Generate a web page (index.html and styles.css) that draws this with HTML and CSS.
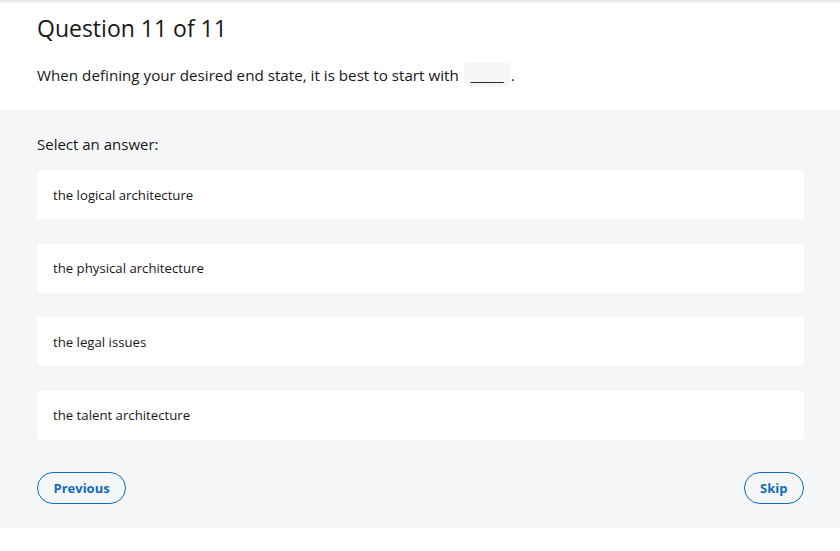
FILE: index.html
```html
<!DOCTYPE html>
<html lang="en">
<head>
<meta charset="utf-8">
<link rel="stylesheet" href="styles.css">
</head>
<body>
<div class="topline"></div>
<header class="head">
  <h1 class="title">Question 11 of 11</h1>
  <p class="question">When defining your desired end state, it is best to start with <span class="blank">_____</span>.</p>
</header>
<main class="answers">
  <p class="prompt">Select an answer:</p>
  <div class="options">
    <div class="option">the logical architecture</div>
    <div class="option">the physical architecture</div>
    <div class="option">the legal issues</div>
    <div class="option">the talent architecture</div>
  </div>
  <div class="nav">
    <button class="btn">Previous</button>
    <button class="btn">Skip</button>
  </div>
</main>
</body>
</html>
```
FILE: styles.css
```css
* { box-sizing: border-box; }
html, body { margin: 0; padding: 0; background: #fff; }
body {
  font-family: "Open Sans", "Noto Sans", sans-serif;
  color: #171717;
  width: 840px;
}
.topline {
  height: 4px;
  background: linear-gradient(#e6e6e6, #fff);
}
.head {
  padding: 8px 36px 0 37px;
  height: 106px;
}
.title {
  margin: 0;
  font-size: 23px;
  font-weight: 400;
  line-height: 32px;
}
.question {
  margin: 19px 0 0;
  font-size: 15.2px;
  line-height: 24px;
}
.blank {
  display: inline-block;
  width: 47px;
  text-align: center;
  background: #f5f6f8;
  border-radius: 4px;
  margin-left: 1px;
  transform: scaleX(1);
}
.answers {
  background: #f5f6f8;
  padding: 23px 36px 24px 37px;
  height: 418px;
}
.prompt {
  margin: 0;
  font-size: 15px;
  line-height: 22px;
}
.options {
  margin-top: 15px;
  display: flex;
  flex-direction: column;
  gap: 24.5px;
}
.option {
  background: #fff;
  border-radius: 3px;
  height: 49px;
  display: flex;
  align-items: center;
  padding-left: 16px;
  font-size: 13.2px;
}
.nav {
  margin-top: 32px;
  display: flex;
  justify-content: space-between;
}
.btn {
  font-family: inherit;
  font-size: 13px;
  font-weight: 700;
  color: #0f6cbd;
  background: transparent;
  border: 1px solid #0f6cbd;
  border-radius: 16px;
  height: 32px;
  padding: 0 15.5px 0 15.5px;
}
```
